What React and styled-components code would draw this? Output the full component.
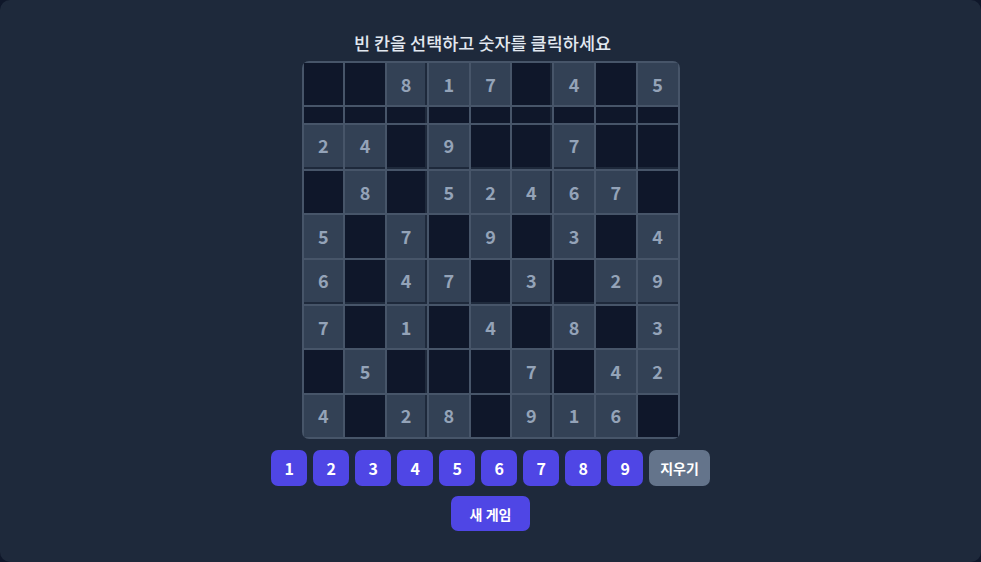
import React, { useState } from 'react'
import styled, { createGlobalStyle } from 'styled-components'

const GlobalStyle = createGlobalStyle`
    * {
        box-sizing: border-box;
    }
    body {
        margin: 0;
        background: #0f172a;
        font-family: "Noto Sans CJK KR", "Noto Sans", sans-serif;
    }
`

const Card = styled.div`
    height: 100vh;
    background: #1e293b;
    border-radius: 10px;
    display: flex;
    flex-direction: column;
    align-items: center;
    justify-content: center;
`

const Title = styled.div`
    font-size: 17.5px;
    line-height: 24px;
    font-weight: 500;
    color: #e2e8f0;
    margin: 0 16px 6px 0;
`

const Board = styled.div`
    width: 378px;
    height: 378px;
    display: grid;
    grid-template-columns: repeat(9, 1fr);
    gap: 2px;
    padding: 2px;
    background: #475569;
    border-radius: 7px;
    margin-bottom: 11px;
`

const Cell = styled.div`
    display: flex;
    align-items: center;
    justify-content: center;
    font-size: 18px;
    line-height: 27px;
    font-weight: 700;
    color: #94a3b8;
    cursor: pointer;
    background: ${p => (p.$filled ? '#334155' : '#0f172a')};
    border-right: ${p => (p.$boxRight ? '2px solid #1e293b' : 'none')};
    border-bottom: ${p => (p.$boxBottom ? '2px solid #1e293b' : 'none')};
`

const Pad = styled.div`
    display: flex;
    gap: 6px;
    margin-bottom: 10px;
`

const NumButton = styled.button`
    height: 36px;
    min-width: 36px;
    padding: 0 ${p => (p.$erase ? '11px' : '0')};
    border: none;
    border-radius: 7px;
    background: ${p => (p.$erase ? '#64748b' : '#4f46e5')};
    color: #ffffff;
    font-family: inherit;
    font-size: ${p => (p.$erase ? '14px' : '16px')};
    font-weight: 700;
    cursor: pointer;
`

const NewGame = styled.button`
    height: 35px;
    padding: 0 18.5px;
    border: none;
    border-radius: 7px;
    background: #4f46e5;
    color: #ffffff;
    font-family: inherit;
    font-size: 14px;
    font-weight: 700;
    cursor: pointer;
`

const puzzle = [
    [0, 0, 8, 1, 7, 0, 4, 0, 5],
    [0, 0, 0, 0, 0, 0, 0, 0, 0],
    [2, 4, 0, 9, 0, 0, 7, 0, 0],
    [0, 8, 0, 5, 2, 4, 6, 7, 0],
    [5, 0, 7, 0, 9, 0, 3, 0, 4],
    [6, 0, 4, 7, 0, 3, 0, 2, 9],
    [7, 0, 1, 0, 4, 0, 8, 0, 3],
    [0, 5, 0, 0, 0, 7, 0, 4, 2],
    [4, 0, 2, 8, 0, 9, 1, 6, 0],
]

const App = () => {
    const [selected, setSelected] = useState(null)

    return (
        <>
            <GlobalStyle />
            <Card>
                <Title>빈 칸을 선택하고 숫자를 클릭하세요</Title>
                <Board>
                    {puzzle.map((row, r) =>
                        row.map((value, c) => (
                            <Cell
                                key={`${r}-${c}`}
                                $filled={value !== 0}
                                $boxRight={c === 2 || c === 5}
                                $boxBottom={r === 2 || r === 5}
                                onClick={() => setSelected([r, c])}
                            >
                                {value !== 0 ? value : null}
                            </Cell>
                        ))
                    )}
                </Board>
                <Pad>
                    {[1, 2, 3, 4, 5, 6, 7, 8, 9].map(n => (
                        <NumButton key={n}>{n}</NumButton>
                    ))}
                    <NumButton $erase>지우기</NumButton>
                </Pad>
                <NewGame onClick={() => setSelected(null)}>새 게임</NewGame>
            </Card>
        </>
    )
}

export default App
